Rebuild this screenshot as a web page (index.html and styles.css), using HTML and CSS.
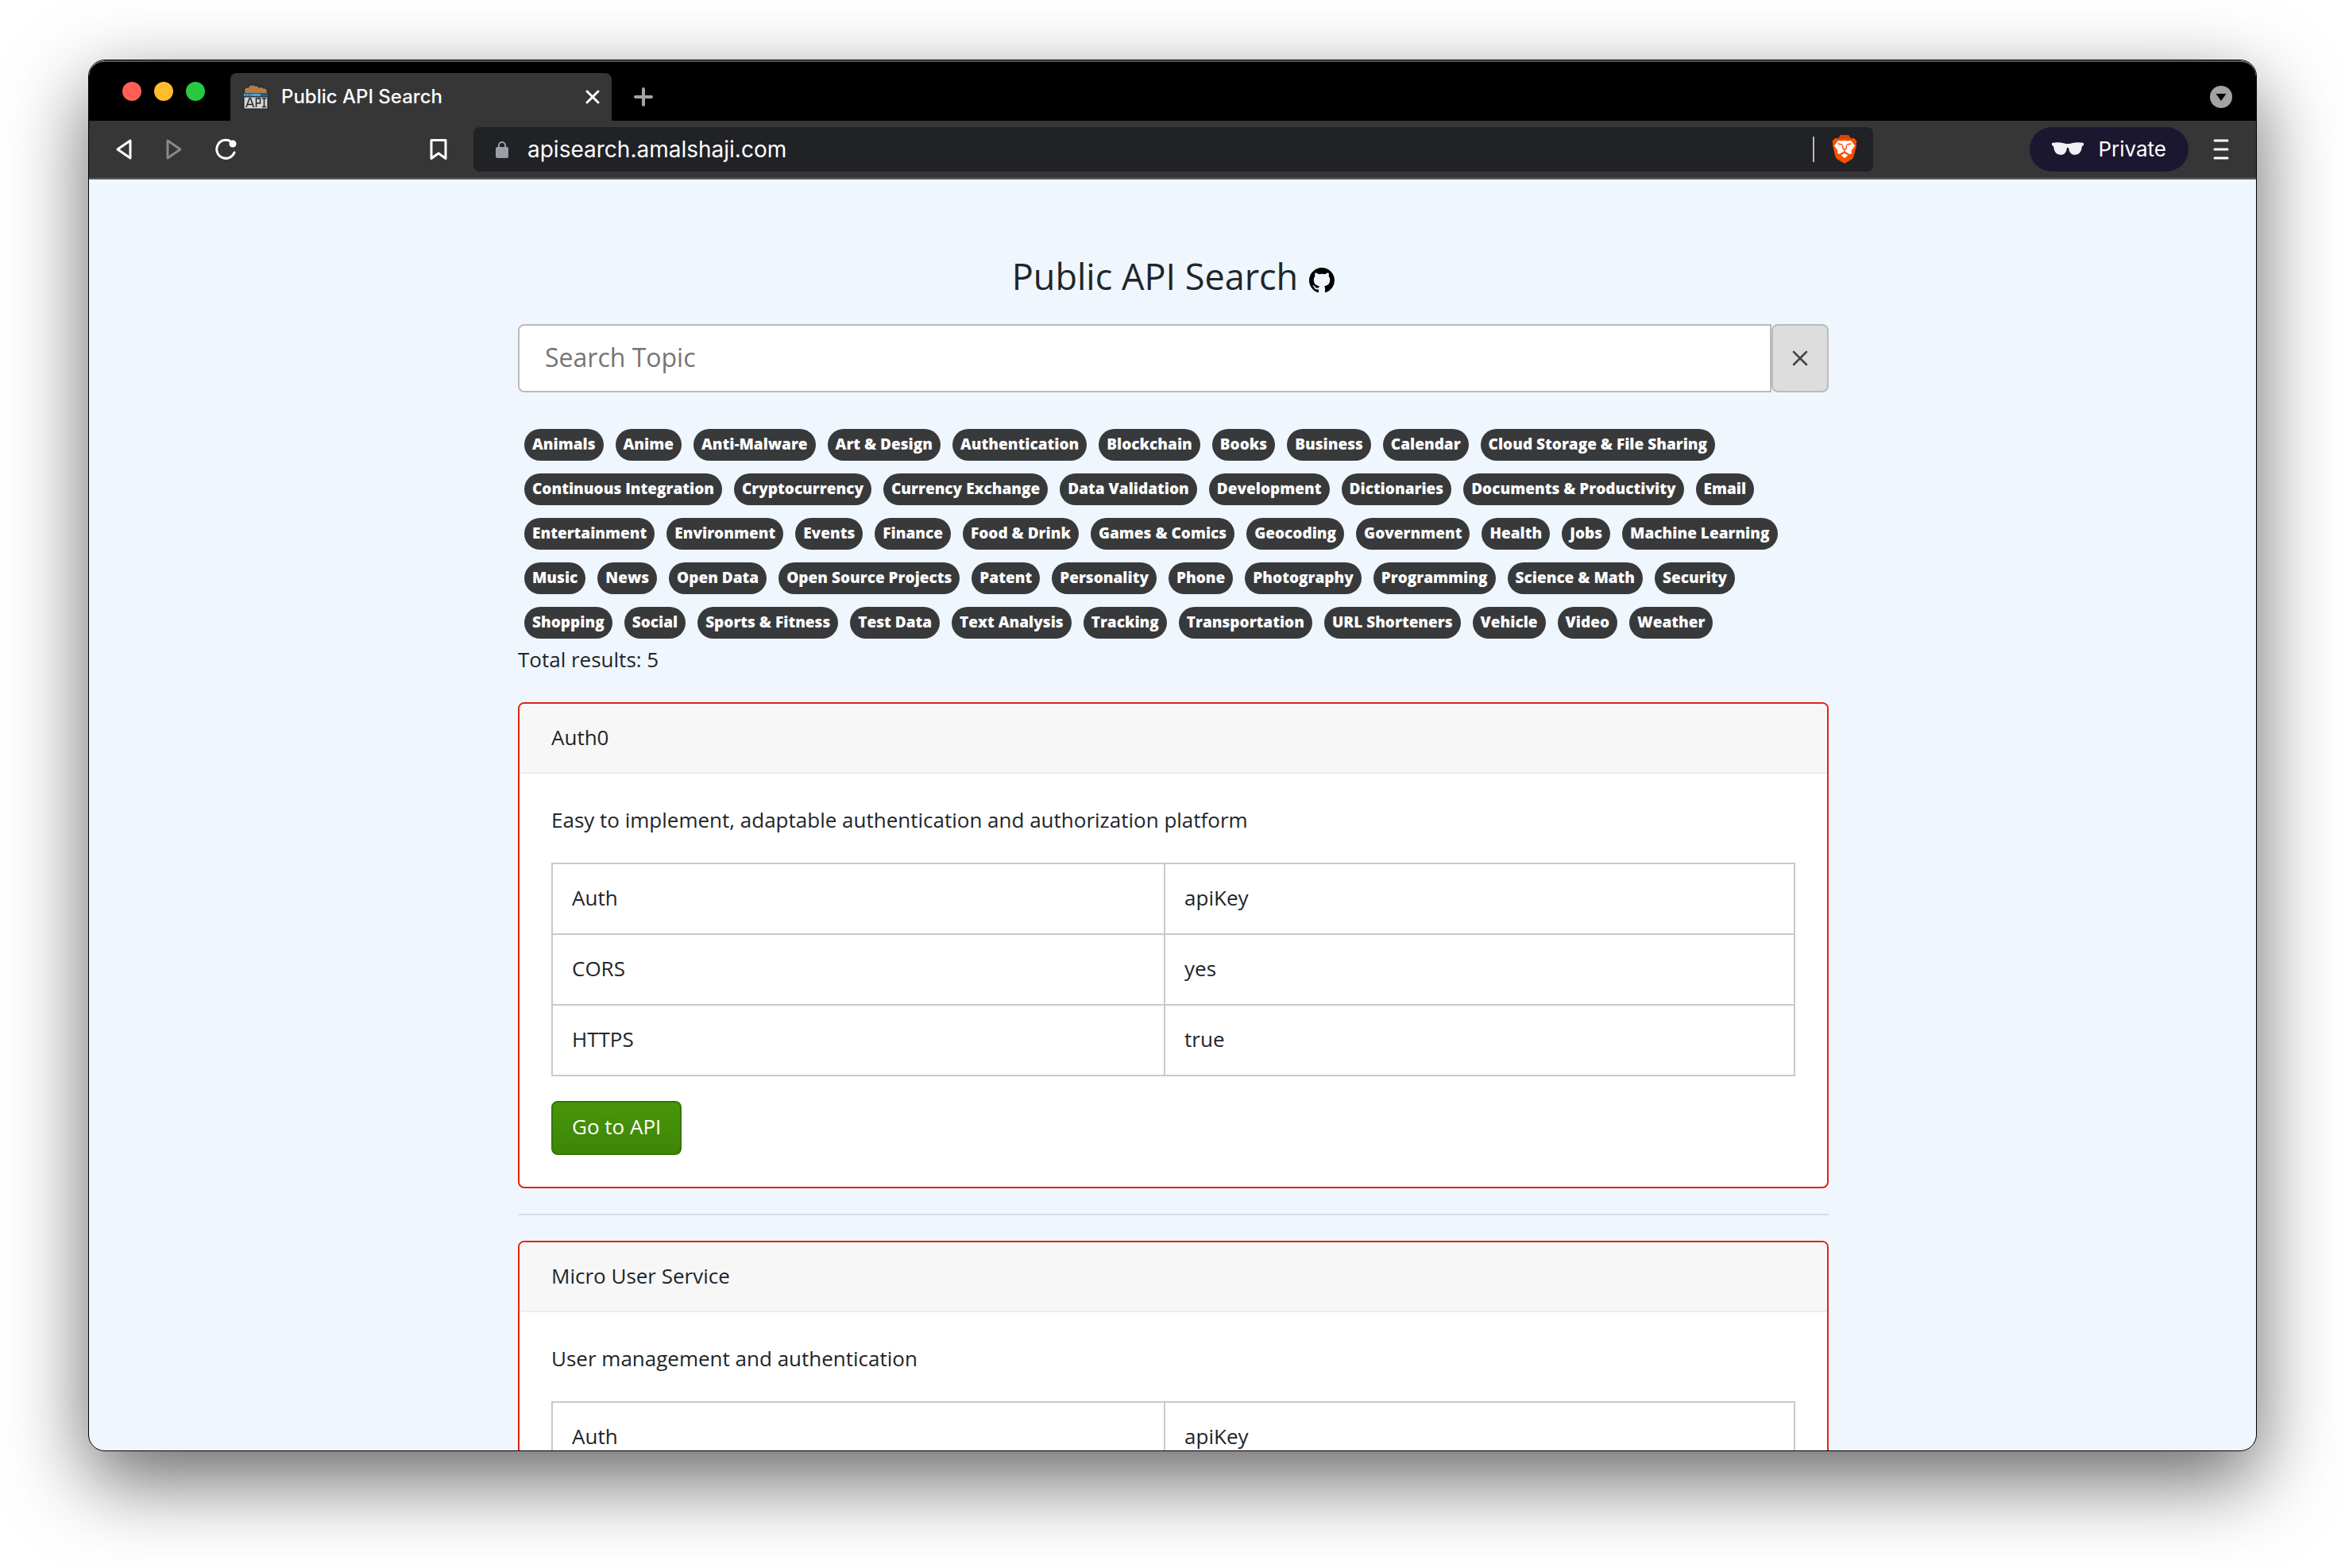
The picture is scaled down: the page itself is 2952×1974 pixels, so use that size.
FILE: index.html
```html
<!DOCTYPE html>
<html lang="en">
<head>
<meta charset="utf-8">
<title>Public API Search</title>
<link rel="stylesheet" href="styles.css">
</head>
<body>
<div class="window">
  <header class="tabstrip">
    <div class="lights"><span class="light red"></span><span class="light yellow"></span><span class="light green"></span></div>
    <div class="tab">
      <svg class="favicon" viewBox="0 0 32 32" aria-hidden="true">
        <path d="M1.500 12V6l2-2 3 0 2-3h5l2 1 3 0 2 2 4-1 1 2h3l2 2v5z" fill="#b07d4f" stroke="#2e2118" stroke-width="1.200"/>
        <path d="M1 11h30v5H1z" fill="#1d5f86"/><path d="M1 12.500h21v2H1z" fill="#5cc3f2"/><path d="M4 12v3M7 12v3M10 12v3" stroke="#1d5f86"/>
        <path d="M1 16h30v15H1z" fill="#d3d5d7" stroke="#222" stroke-width="1.200"/>
        <path d="M4 29l4-11h1.500l4 11M5.500 25.500h6.500M16.500 29V18h5v6h-5M24 18h5M26.500 18v10.500M24 28.500h5" fill="none" stroke="#222" stroke-width="1.500"/>
      </svg>
      <span class="tab-title">Public API Search</span>
      <button class="icon-button" aria-label="Close tab"><svg width="18" height="18" viewBox="0 0 18 18"><path d="M2 2l14 14M16 2L2 16" stroke="#fff" stroke-width="3" stroke-linecap="round"/></svg></button>
    </div>
    <button class="icon-button new-tab" aria-label="New tab"><svg width="24" height="24" viewBox="0 0 24 24"><path d="M12 2v20M2 12h20" stroke="#a2a3a5" stroke-width="4" stroke-linecap="round"/></svg></button>
    <button class="icon-button tab-search" aria-label="Search tabs"><svg width="32" height="28" viewBox="0 0 32 28"><circle cx="16" cy="14" r="14" fill="#a2a3a5"/><path d="M9.500 10h13L16 19z" fill="#000"/></svg></button>
  </header>
  <nav class="toolbar">
    <div class="nav-buttons">
      <button class="icon-button" aria-label="Back"><svg width="20" height="28" viewBox="0 0 20 28"><path d="M18 3v22L2 14z" fill="none" stroke="#fff" stroke-width="3" stroke-linejoin="round"/></svg></button>
      <button class="icon-button" aria-label="Forward"><svg width="20" height="28" viewBox="0 0 20 28"><path d="M3 3v22l16-11z" fill="none" stroke="#88898b" stroke-width="3" stroke-linejoin="round"/></svg></button>
      <button class="icon-button" aria-label="Reload"><svg width="28" height="28" viewBox="0 0 28 28"><path d="M21 4.500A11.500 11.500 0 1 0 25 18" fill="none" stroke="#fff" stroke-width="3" stroke-linecap="round"/><circle cx="23" cy="7" r="4.500" fill="#fff"/></svg></button>
    </div>
    <button class="icon-button bookmark" aria-label="Bookmark"><svg width="22" height="28" viewBox="0 0 22 28"><path d="M2 2.500h18v23L11 19l-9 6.500z" fill="none" stroke="#fff" stroke-width="3" stroke-linejoin="round"/></svg></button>
    <div class="address">
      <svg class="lock" width="16" height="22" viewBox="0 0 16 22"><path d="M4 10V6a4 4 0 0 1 8 0v4" fill="none" stroke="#9aa0a6" stroke-width="2"/><rect y="8" width="16" height="14" rx="2" fill="#9aa0a6"/></svg>
      <input class="url" type="text" aria-label="Address" value="apisearch.amalshaji.com">
      <span class="divider"></span>
      <svg width="32" height="36" viewBox="0 0 32 36" aria-hidden="true">
        <path d="M4 4h24l3.500 4-1 3 .5 2-3.500 14q-.5 2-2.500 3.500L16 36l-9-5.500Q5 29 4.500 27L1 13l.5-2-1-3z" fill="#fb5000"/>
        <path d="M5 4h3l3-4h10l3 4h3l-3 2-8-1-8 1z" fill="#e04400"/>
        <path d="M8 7l5 .5 3-.5 3 .5 5-.5 5 6.500-4 5.500q-1 1.500 0 3.500-1 2-3 1.500L16 20l-6 3.500Q8 24 7 22.500q1-2 0-3.500l-4-5.500z" fill="#fff"/>
        <path d="M16 23l4.500 2.500L16 29l-4.500-3.500z" fill="#fff"/>
        <path d="M7.500 11l5.500 1 M24.500 11L19 12M13.500 12.500l.5 4.500 2 1.500 2-1.500.5-4.500M16 18.500V20" fill="none" stroke="#fb5000" stroke-width="1.500"/>
      </svg>
    </div>
    <div class="toolbar-end">
      <button class="private"><svg width="40" height="18" viewBox="0 0 40 18"><path d="M0 1q9-2 18 1h4q9-3 18-1v3l-2 1q-1 11-9 11-7 0-8-9h-2q-1 9-8 9-8 0-9-11l-2-1z" fill="#f1f0f4"/></svg>Private</button>
      <button class="icon-button" aria-label="Menu"><svg width="20" height="26" viewBox="0 0 20 26"><path d="M2 2h16M2 13h16M2 24h16" stroke="#fff" stroke-width="3" stroke-linecap="round"/></svg></button>
    </div>
  </nav>
  <main class="page">
    <div class="container">
      <h1 class="title">Public API Search <a href="#" aria-label="GitHub"><svg width="32" height="32" viewBox="0 0 16 16"><path d="M8 0C3.580 0 0 3.580 0 8c0 3.540 2.290 6.530 5.470 7.590.4.070.55-.17.55-.38 0-.19-.01-.82-.01-1.490-2.010.37-2.530-.49-2.690-.94-.09-.23-.48-.94-.82-1.130-.28-.15-.68-.52-.01-.53.63-.01 1.080.58 1.230.82.72 1.210 1.870.87 2.330.66.07-.52.28-.87.51-1.070-1.780-.2-3.640-.89-3.640-3.950 0-.87.31-1.590.82-2.150-.08-.2-.36-1.020.08-2.120 0 0 .67-.21 2.200.82.64-.18 1.320-.27 2-.27s1.360.09 2 .27c1.530-1.040 2.200-.82 2.200-.82.44 1.100.16 1.920.08 2.120.51.56.82 1.270.82 2.150 0 3.070-1.870 3.750-3.650 3.950.29.25.54.73.54 1.480 0 1.070-.01 1.930-.01 2.200 0 .21.15.46.55.38A8.010 8.010 0 0 0 16 8c0-4.420-3.580-8-8-8z"/></svg></a></h1>
      <form class="search">
        <input class="search-input" type="text" placeholder="Search Topic" aria-label="Search Topic">
        <button class="clear" type="button" aria-label="Clear"><svg width="20" height="20" viewBox="0 0 20 20"><path d="M2 2l16 16M18 2L2 18" stroke="#444" stroke-width="2.500" stroke-linecap="round"/></svg></button>
      </form>
      <div class="tags">
        <a class="tag" href="#">Animals</a><a class="tag" href="#">Anime</a><a class="tag" href="#">Anti-Malware</a><a class="tag" href="#">Art &amp; Design</a><a class="tag" href="#">Authentication</a><a class="tag" href="#">Blockchain</a><a class="tag" href="#">Books</a><a class="tag" href="#">Business</a><a class="tag" href="#">Calendar</a><a class="tag" href="#">Cloud Storage &amp; File Sharing</a>
        <a class="tag" href="#">Continuous Integration</a><a class="tag" href="#">Cryptocurrency</a><a class="tag" href="#">Currency Exchange</a><a class="tag" href="#">Data Validation</a><a class="tag" href="#">Development</a><a class="tag" href="#">Dictionaries</a><a class="tag" href="#">Documents &amp; Productivity</a><a class="tag" href="#">Email</a>
        <a class="tag" href="#">Entertainment</a><a class="tag" href="#">Environment</a><a class="tag" href="#">Events</a><a class="tag" href="#">Finance</a><a class="tag" href="#">Food &amp; Drink</a><a class="tag" href="#">Games &amp; Comics</a><a class="tag" href="#">Geocoding</a><a class="tag" href="#">Government</a><a class="tag" href="#">Health</a><a class="tag" href="#">Jobs</a><a class="tag" href="#">Machine Learning</a>
        <a class="tag" href="#">Music</a><a class="tag" href="#">News</a><a class="tag" href="#">Open Data</a><a class="tag" href="#">Open Source Projects</a><a class="tag" href="#">Patent</a><a class="tag" href="#">Personality</a><a class="tag" href="#">Phone</a><a class="tag" href="#">Photography</a><a class="tag" href="#">Programming</a><a class="tag" href="#">Science &amp; Math</a><a class="tag" href="#">Security</a>
        <a class="tag" href="#">Shopping</a><a class="tag" href="#">Social</a><a class="tag" href="#">Sports &amp; Fitness</a><a class="tag" href="#">Test Data</a><a class="tag" href="#">Text Analysis</a><a class="tag" href="#">Tracking</a><a class="tag" href="#">Transportation</a><a class="tag" href="#">URL Shorteners</a><a class="tag" href="#">Vehicle</a><a class="tag" href="#">Video</a><a class="tag" href="#">Weather</a>
      </div>
      <p class="total">Total results: 5</p>
      <article class="card">
        <h2 class="card-header">Auth0</h2>
        <div class="card-body">
          <p class="description">Easy to implement, adaptable authentication and authorization platform</p>
          <table class="facts">
            <tr><td>Auth</td><td>apiKey</td></tr>
            <tr><td>CORS</td><td>yes</td></tr>
            <tr><td>HTTPS</td><td>true</td></tr>
          </table>
          <a class="go" href="#">Go to API</a>
        </div>
      </article>
      <hr class="rule">
      <article class="card">
        <h2 class="card-header">Micro User Service</h2>
        <div class="card-body">
          <p class="description">User management and authentication</p>
          <table class="facts">
            <tr><td>Auth</td><td>apiKey</td></tr>
          </table>
        </div>
      </article>
    </div>
  </main>
</div>
</body>
</html>
```
FILE: styles.css
```css
* { box-sizing: border-box; }
body {
  margin: 0;
  height: 100vh;
  padding: 75px 111px 147px;
  background: #fff;
  overflow: hidden;
  font: 26px/40px "Open Sans", sans-serif;
  color: #212529;
}
button { font: inherit; border: 0; padding: 0; cursor: pointer; }
svg { display: block; flex: none; }
.icon-button { background: none; display: flex; align-items: center; justify-content: center; }

.window {
  height: 100%;
  display: flex;
  flex-direction: column;
  border: 1px solid #000;
  border-radius: 21px;
  overflow: hidden;
  background: #eff6fd;
  box-shadow: 0 36px 100px rgba(0, 0, 0, .6);
}
.tabstrip {
  flex: none;
  height: 76px;
  display: flex;
  align-items: flex-end;
  background: #000;
  border-top: 2px solid #555;
  border-radius: 20px 20px 0 0;
  font: 500 24px/32px Inter, sans-serif;
  color: #fff;
}
.lights { display: flex; gap: 16px; padding: 0 32px 25px 42px; }
.light { width: 24px; height: 24px; border-radius: 50%; }
.red { background: #ff5f57; }
.yellow { background: #febc2e; }
.green { background: #28c840; }
.tab {
  width: 480px;
  height: 60px;
  display: flex;
  align-items: center;
  padding: 0 15px 0 16px;
  border-radius: 8px 8px 0 0;
  background: #363636;
}
.favicon { width: 32px; height: 32px; margin-right: 16px; }
.tab-title { flex: 1; }
.new-tab { height: 60px; margin-left: 28px; }
.tab-search { height: 60px; margin: 0 28px 0 auto; }

.toolbar {
  flex: none;
  height: 74px;
  display: flex;
  align-items: center;
  background: #363636;
  border-bottom: 2px solid #606060;
  font: 26px/34px Inter, sans-serif;
  color: #fff;
}
.nav-buttons { display: flex; gap: 42px; padding-left: 34px; }
.bookmark { margin: 0 33px 0 243px; }
.address {
  flex: 1;
  height: 56px;
  display: flex;
  align-items: center;
  padding: 0 20px 0 28px;
  border-radius: 8px;
  background: #212226;
}
.url { flex: 1; margin: 0 0 0 24px; padding: 0; border: 0; background: none; color: #fff; font: 28px/36px Inter, sans-serif; }
.divider { width: 2px; height: 32px; margin-right: 22px; background: #bbb; }
.toolbar-end { display: flex; align-items: center; gap: 31px; padding: 0 34px 0 197px; }
.private {
  height: 56px;
  display: flex;
  align-items: center;
  gap: 18px;
  padding: 0 28px;
  border-radius: 28px;
  background: #1c1731;
  color: #fff;
}

.page { flex: 1; min-height: 0; overflow: hidden; padding: 88px 40px 0 42px; }
.container { max-width: 1650px; margin: 0 auto; }
.title {
  display: flex;
  align-items: center;
  justify-content: center;
  gap: 14px;
  margin: 0 0 26px;
  font-size: 45px;
  line-height: 68px;
  font-weight: 400;
}
.title a { color: #000; padding-top: 10px; }
.search { display: flex; }
.search-input {
  flex: 1;
  height: 86px;
  padding: 0 32px 4px;
  border: 2px solid #bbb;
  border-radius: 8px 0 0 8px;
  background: #fff;
  font: 32px/48px "Open Sans", sans-serif;
}
.search-input::placeholder { color: #757575; opacity: 1; }
.clear {
  width: 72px;
  display: flex;
  align-items: center;
  justify-content: center;
  border: 2px solid #bbb;
  border-radius: 8px;
  background: #ddd;
}
.tags { display: flex; flex-wrap: wrap; gap: 16px 15px; padding: 46px 8px 0; }
.tag {
  height: 40px;
  padding: 0 10px;
  border-radius: 20px;
  background: #38393b;
  color: #fff;
  font-size: 19px;
  line-height: 38px;
  font-weight: 800;
  text-decoration: none;
}
.total { margin: 6px 0 34px; }
.card { border: 2px solid #df2415; border-radius: 8px; background: #fff; overflow: hidden; }
.card-header {
  margin: 0;
  padding: 22px 40px 24px;
  background: #f7f7f7;
  border-bottom: 2px solid #ededed;
  font: inherit;
}
.card-body { padding: 38px 40px 40px; }
.description { margin: 0 0 34px; }
.facts { width: 100%; border-collapse: collapse; table-layout: fixed; margin-bottom: 31px; }
.facts td { height: 89px; padding: 0 24px 4px; border: 2px solid #c9c9c9; }
.facts td:first-child { width: 49.3%; }
.go {
  display: inline-block;
  padding: 10px 24px 14px;
  border: 2px solid #357500;
  border-radius: 8px;
  background: linear-gradient(#489608, #3f8508);
  color: #fff;
  text-decoration: none;
}
.rule { height: 2px; margin: 32px 0; border: 0; background: #d8dce0; }
```
